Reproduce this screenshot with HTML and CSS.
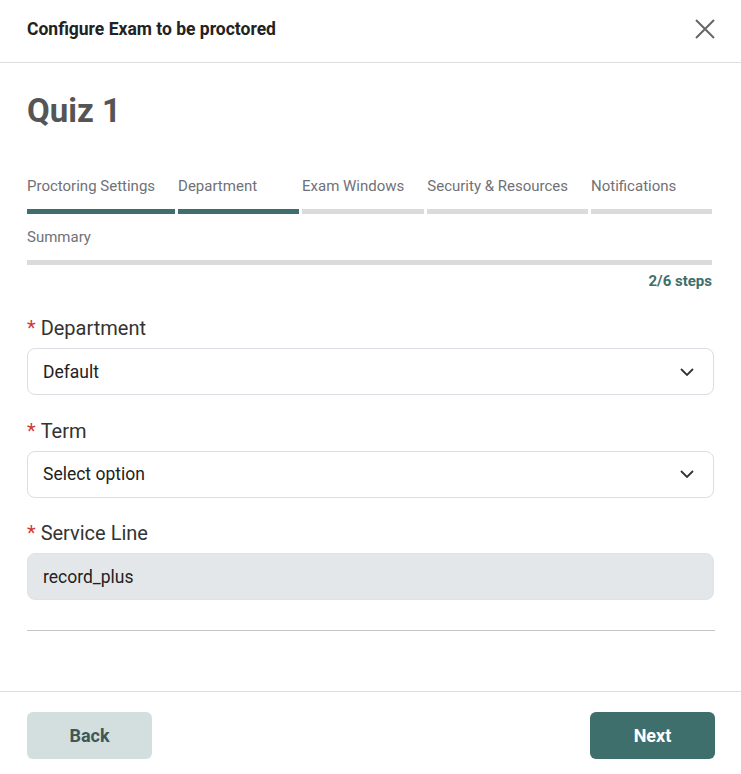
FILE: index.html
```html
<!DOCTYPE html>
<html lang="en">
<head>
<meta charset="utf-8">
<title>Configure Exam to be proctored</title>
<link rel="stylesheet" href="styles.css">
</head>
<body>
<div class="modal">
  <header class="modal-header">
    <h1 class="modal-title">Configure Exam to be proctored</h1>
    <button class="close-btn" aria-label="Close">
      <svg width="20" height="20" viewBox="0 0 20 20"><path d="M1 1L19 19M19 1L1 19" stroke="#666" stroke-width="2" fill="none"/></svg>
    </button>
  </header>
  <main class="modal-body">
    <h2 class="exam-name">Quiz 1</h2>
    <div class="steps">
      <div class="step done"><span class="step-label">Proctoring Settings</span><span class="step-bar"></span></div>
      <div class="step done"><span class="step-label">Department</span><span class="step-bar"></span></div>
      <div class="step"><span class="step-label">Exam Windows</span><span class="step-bar"></span></div>
      <div class="step"><span class="step-label">Security &amp; Resources</span><span class="step-bar"></span></div>
      <div class="step"><span class="step-label">Notifications</span><span class="step-bar"></span></div>
      <div class="step"><span class="step-label">Summary</span><span class="step-bar"></span></div>
    </div>
    <div class="step-count">2/6 steps</div>

    <div class="field">
      <label class="field-label"><span class="req">*</span>Department</label>
      <div class="select">
        <span>Default</span>
        <svg class="chev" width="14" height="8" viewBox="0 0 14 8"><path d="M1 1L7 7L13 1" stroke="#333" stroke-width="1.8" fill="none"/></svg>
      </div>
    </div>
    <div class="field">
      <label class="field-label"><span class="req">*</span>Term</label>
      <div class="select">
        <span>Select option</span>
        <svg class="chev" width="14" height="8" viewBox="0 0 14 8"><path d="M1 1L7 7L13 1" stroke="#333" stroke-width="1.8" fill="none"/></svg>
      </div>
    </div>
    <div class="field">
      <label class="field-label"><span class="req">*</span>Service Line</label>
      <div class="select disabled">
        <span>record_plus</span>
      </div>
    </div>
    <hr class="divider">
  </main>
  <footer class="modal-footer">
    <button class="btn btn-back">Back</button>
    <button class="btn btn-next">Next</button>
  </footer>
</div>
</body>
</html>
```
FILE: styles.css
```css
* { box-sizing: border-box; }
html, body { margin: 0; padding: 0; background: #fff; }
body { font-family: Roboto, "Liberation Sans", sans-serif; color: #222; }

.modal { width: 741px; min-height: 774px; display: flex; flex-direction: column; }

.modal-header {
  height: 63px;
  border-bottom: 1px solid #dedede;
  display: flex;
  align-items: flex-start;
  justify-content: space-between;
  padding: 18px 26px 0 27px;
}
.modal-title { margin: 0; font-size: 17.5px; line-height: 22px; font-weight: 700; color: #222; }
.close-btn { border: 0; background: none; padding: 0; width: 20px; height: 20px; margin-top: 1px; cursor: pointer; }
.close-btn svg { display: block; }

.modal-body { padding: 28px 27px 0 27px; flex: 1; }
.exam-name { margin: 0 0 45px 0; font-size: 33px; line-height: 40px; font-weight: 700; color: #555; }

.steps { display: flex; flex-wrap: wrap; column-gap: 3px; row-gap: 13px; padding-right: 2px; }
.step { flex: 1 1 auto; min-width: 121px; display: flex; flex-direction: column; }
.step-label { font-size: 15px; line-height: 20px; color: #6f7177; padding-right: 17px; white-space: nowrap; }
.step-bar { display: block; height: 5px; margin-top: 13px; background: #dbdbdb; }
.step.done .step-bar { background: #3e6f6c; }

.step-count { text-align: right; font-size: 15px; line-height: 20px; font-weight: 700; color: #3e6f6c; margin-top: 6px; padding-right: 2px; }

.field { margin-top: 24px; }
.field + .field { margin-top: 22.5px; }
.field-label { display: block; font-size: 20px; line-height: 26px; color: #333; margin-bottom: 7px; }
.req { color: #d03a3a; margin-right: 5px; }
.select {
  height: 47px;
  border: 1px solid #dcdce2;
  border-radius: 8px;
  display: flex;
  align-items: center;
  justify-content: space-between;
  padding: 0 19px 0 15px;
  font-size: 17.5px;
  color: #222;
}
.select.disabled { background: #e4e7ea; border-color: #e0e3e6; }
.chev { display: block; }

.divider { border: 0; border-top: 1px solid #c6c6c6; margin: 30px -1px 0 0; }

.modal-footer {
  border-top: 1px solid #dedede;
  display: flex;
  justify-content: space-between;
  padding: 20px 26px 15px 27px;
}
.btn {
  width: 125px; height: 47px; border: 0; border-radius: 6px;
  font-family: Roboto, "Liberation Sans", sans-serif; font-size: 18px; font-weight: 700;
}
.btn-back { background: #d3dede; color: #3f5755; }
.btn-next { background: #3e6f6c; color: #fff; }
```
